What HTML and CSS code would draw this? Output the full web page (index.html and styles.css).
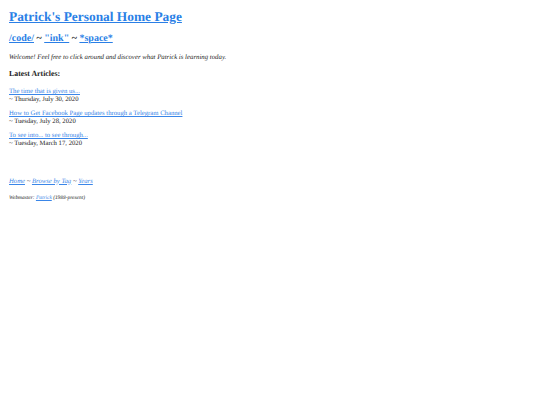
FILE: index.html
```html
<!DOCTYPE html>
<html>
<head>
<meta charset="utf-8">
<title>Patrick's Personal Home Page</title>
<link rel="stylesheet" href="styles.css">
</head>
<body>
<h1 class="title"><a href="#">Patrick's Personal Home Page</a></h1>
<h2 class="sections"><a href="#">/code/</a> ~ <a href="#">"ink"</a> ~ <a href="#">*space*</a></h2>
<p class="welcome">Welcome! Feel free to click around and discover what Patrick is learning today.</p>
<h3 class="latest">Latest Articles:</h3>
<p class="article"><a href="#">The time that is given us...</a><br>~ Thursday, July 30, 2020</p>
<p class="article"><a href="#">How to Get Facebook Page updates through a Telegram Channel</a><br>~ Tuesday, July 28, 2020</p>
<p class="article"><a href="#">To see into... to see through...</a><br>~ Tuesday, March 17, 2020</p>
<p class="footnav"><a href="#">Home</a> ~ <a href="#">Browse by Tag</a> ~ <a href="#">Years</a></p>
<p class="webmaster">Webmaster: <a href="#">Patrick</a> (1988-present)</p>
</body>
</html>
```
FILE: styles.css
```css
html { background: #fff; }
body {
  margin: 0;
  padding: 0 9px;
  font-family: "Liberation Serif", "Times New Roman", serif;
  font-size: 6.7px;
  line-height: 8px;
  color: #222;
  text-rendering: geometricPrecision;
}
p { margin: 0; }
a { color: #3a86e8; }
.title { font-size: 13.4px; line-height: 16px; margin: 9px 0 8px; }
.title a { color: #2a7fe6; }
.sections { font-size: 10px; line-height: 12px; margin: 0 0 8.5px; }
.sections a { color: #2a7fe6; }
.welcome { font-style: italic; font-size: 6.8px; margin: 0 0 7.5px; }
.latest { font-size: 7.84px; line-height: 9px; margin: 0 0 10px; }
.article { margin: 0 0 6px; }
.footnav { font-style: italic; margin: 29.5px 0 9px; }
.webmaster { font-style: italic; font-size: 5.4px; line-height: 7px; }
```
